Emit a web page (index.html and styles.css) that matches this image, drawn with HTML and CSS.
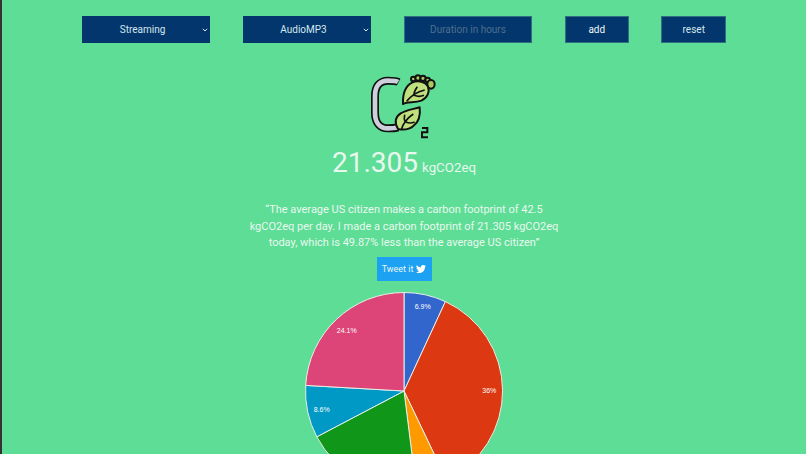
FILE: index.html
```html
<!DOCTYPE html>
<html lang="en">
<head>
<meta charset="utf-8">
<title>Carbon footprint</title>
<link rel="stylesheet" href="styles.css">
</head>
<body>
<main class="page">
  <form class="controls">
    <div class="select-wrap">
      <select class="control control-select"><option>Streaming</option></select>
      <svg class="chevron" viewBox="0 0 6 4"><path d="M.8.8 3 3 5.2.8"/></svg>
    </div>
    <div class="select-wrap">
      <select class="control control-select"><option>AudioMP3</option></select>
      <svg class="chevron" viewBox="0 0 6 4"><path d="M.8.8 3 3 5.2.8"/></svg>
    </div>
    <input class="control control-input" type="text" placeholder="Duration in hours">
    <button class="control control-add" type="button">add</button>
    <button class="control control-reset" type="button">reset</button>
  </form>
  <svg class="logo" viewBox="0 0 240 225" aria-label="CO2 footprint logo">
    <path class="c-outline" d="M104 36C96 32 84 32 72 32C46 32 33 50 33 78V128C33 156 46 175 72 175C82 175 92 175 102 172"/>
    <path class="c-fill" d="M102 36C96 32 84 32 72 32C46 32 33 50 33 78V128C33 156 46 175 72 175C82 175 92 175 100 172"/>
    <g class="toes">
      <circle cx="148" cy="27" r="7"/><circle cx="162" cy="24" r="8"/><circle cx="177" cy="25" r="8"/>
      <circle cx="191" cy="30" r="7"/><ellipse cx="201" cy="43" rx="11" ry="13"/>
    </g>
    <path class="leaf" d="M117 102C116 72 124 48 144 38C162 30 184 34 192 50C198 66 190 84 172 92C152 100 132 94 117 102Z"/>
    <path class="vein" d="M128 94C142 76 158 66 182 60M150 74C150 66 154 58 160 50M150 76C160 80 170 80 180 76"/>
    <path class="leaf" d="M102 177C90 158 94 140 110 130C126 120 146 118 167 112C170 136 164 156 148 168C134 180 116 180 102 177Z"/>
    <path class="vein" d="M112 179C118 158 130 144 148 132M124 158C120 150 120 142 122 134M126 156C134 160 142 160 152 156"/>
    <path class="two" d="M174 174H190V187H174V202H192"/>
  </svg>
  <p class="total"><span class="total-value">21.305</span> <span class="total-unit">kgCO2eq</span></p>
  <p class="quote">“The average US citizen makes a carbon footprint of 42.5 kgCO2eq per day. I made a carbon footprint of 21.305 kgCO2eq today, which is 49.87% less than the average US citizen”</p>
  <a class="tweet" href="#">Tweet it
    <svg class="tweet-icon" viewBox="0 0 24 24"><path d="M23.95 4.57a10 10 0 0 1-2.82.77 4.96 4.96 0 0 0 2.16-2.72 9.9 9.9 0 0 1-3.12 1.19 4.92 4.92 0 0 0-8.38 4.48A13.96 13.96 0 0 1 1.64 3.16a4.92 4.92 0 0 0 1.52 6.57 4.9 4.9 0 0 1-2.23-.61v.06a4.92 4.92 0 0 0 3.95 4.83 5 5 0 0 1-2.21.08 4.94 4.94 0 0 0 4.6 3.42A9.87 9.87 0 0 1 0 19.54a13.94 13.94 0 0 0 7.55 2.21c9.05 0 14-7.5 14-13.98 0-.21 0-.42-.02-.63a9.94 9.94 0 0 0 2.42-2.57z"/></svg>
  </a>
  <svg class="pie" viewBox="-100 -100 200 200" role="img" aria-label="Emissions pie chart">
    <path class="s-blue" d="M0 0V-98.5A98.5 98.5 0 0 1 41.4-89.4Z"/>
    <path class="s-red" d="M0 0L41.4-89.4A98.5 98.5 0 0 1 42.5 88.9Z"/>
    <path class="s-orange" d="M0 0L42.5 88.9A98.5 98.5 0 0 1 12.3 97.7Z"/>
    <path class="s-green" d="M0 0L12.3 97.7A98.5 98.5 0 0 1-87.2 45.8Z"/>
    <path class="s-cyan" d="M0 0L-87.2 45.8A98.5 98.5 0 0 1-98.3-5.6Z"/>
    <path class="s-pink" d="M0 0L-98.3-5.6A98.5 98.5 0 0 1 0-98.5Z"/>
    <text x="18.7" y="-82.5">6.9%</text>
    <text x="85.3" y="2.2">36%</text>
    <text x="-82.3" y="20.5">8.6%</text>
    <text x="-57.3" y="-57.8">24.1%</text>
  </svg>
</main>
</body>
</html>
```
FILE: styles.css
```css
html {
  overflow: hidden;
}
body {
  margin: 0;
  min-height: 100vh;
  background: #5edd96;
  border-left: 2px solid #333;
  font-family: Roboto, "Liberation Sans", sans-serif;
  color: #e8f8ee;
}
.page {
  display: flex;
  flex-direction: column;
  align-items: center;
}
.controls {
  display: flex;
  gap: 32.5px;
  margin-top: 16px;
  height: 27px;
}
.select-wrap {
  position: relative;
  width: 128.5px;
  height: 27px;
}
.chevron {
  position: absolute;
  top: 12px;
  right: 2px;
  width: 6px;
  height: 4px;
  fill: none;
  stroke: #d5e6ec;
  stroke-width: 1;
  pointer-events: none;
}
.control {
  box-sizing: border-box;
  height: 27px;
  margin: 0;
  background: #03366c;
  border: 1px solid #2f6f80;
  border-radius: 0;
  font: 10px Roboto, sans-serif;
  color: #d5e6ec;
  text-align: center;
  outline: 0;
}
.control-select {
  display: block;
  width: 100%;
  padding: 0 7px 0 0;
  border-color: #03366c;
  appearance: none;
  -webkit-appearance: none;
}
.control-input {
  width: 128.5px;
}
.control-input::placeholder {
  color: #4f6f8f;
  opacity: 1;
}
.control-add {
  width: 64px;
  color: #eef6f6;
}
.control-reset {
  width: 65px;
}
.logo {
  display: block;
  width: 80px;
  height: 75px;
  margin-top: 27px;
  margin-left: 0;
}
.c-outline,
.c-fill {
  fill: none;
}
.c-outline {
  stroke: #111;
  stroke-width: 24;
}
.c-fill {
  stroke: #cdd0dc;
  stroke-width: 14;
}
.toes {
  fill: #a9c95e;
  stroke: #111;
  stroke-width: 6;
}
.leaf {
  fill: #bfe07c;
  stroke: #111;
  stroke-width: 6;
  stroke-linejoin: round;
}
.vein {
  fill: none;
  stroke: #111;
  stroke-width: 5;
}
.two {
  fill: none;
  stroke: #111;
  stroke-width: 6;
}
.total {
  margin: 1px 0 0;
  line-height: 33px;
  white-space: nowrap;
}
.total-value {
  font-size: 28px;
}
.total-unit {
  font-size: 13.3px;
}
.quote {
  width: 315px;
  margin: 18px 0 0;
  font-size: 11px;
  line-height: 16.5px;
  text-align: center;
}
.tweet {
  display: flex;
  align-items: center;
  justify-content: center;
  gap: 3px;
  width: 55px;
  height: 24px;
  margin-top: 5.5px;
  background: #1da1f2;
  color: #e8f6fd;
  font-size: 9px;
  text-decoration: none;
}
.tweet-icon {
  width: 10px;
  height: 10px;
  fill: #fff;
}
.pie {
  display: block;
  width: 200px;
  height: 200px;
  margin-top: 9.5px;
  flex: none;
}
.pie path {
  stroke: #e6f0ea;
  stroke-width: 1;
}
.pie text {
  font: 7px "Liberation Sans", Arial, sans-serif;
  fill: #fff;
  text-anchor: middle;
}
.s-blue { fill: #3366cc; }
.s-red { fill: #dc3912; }
.s-orange { fill: #ff9900; }
.s-green { fill: #109618; }
.s-cyan { fill: #0099c6; }
.s-pink { fill: #dd4477; }
```
